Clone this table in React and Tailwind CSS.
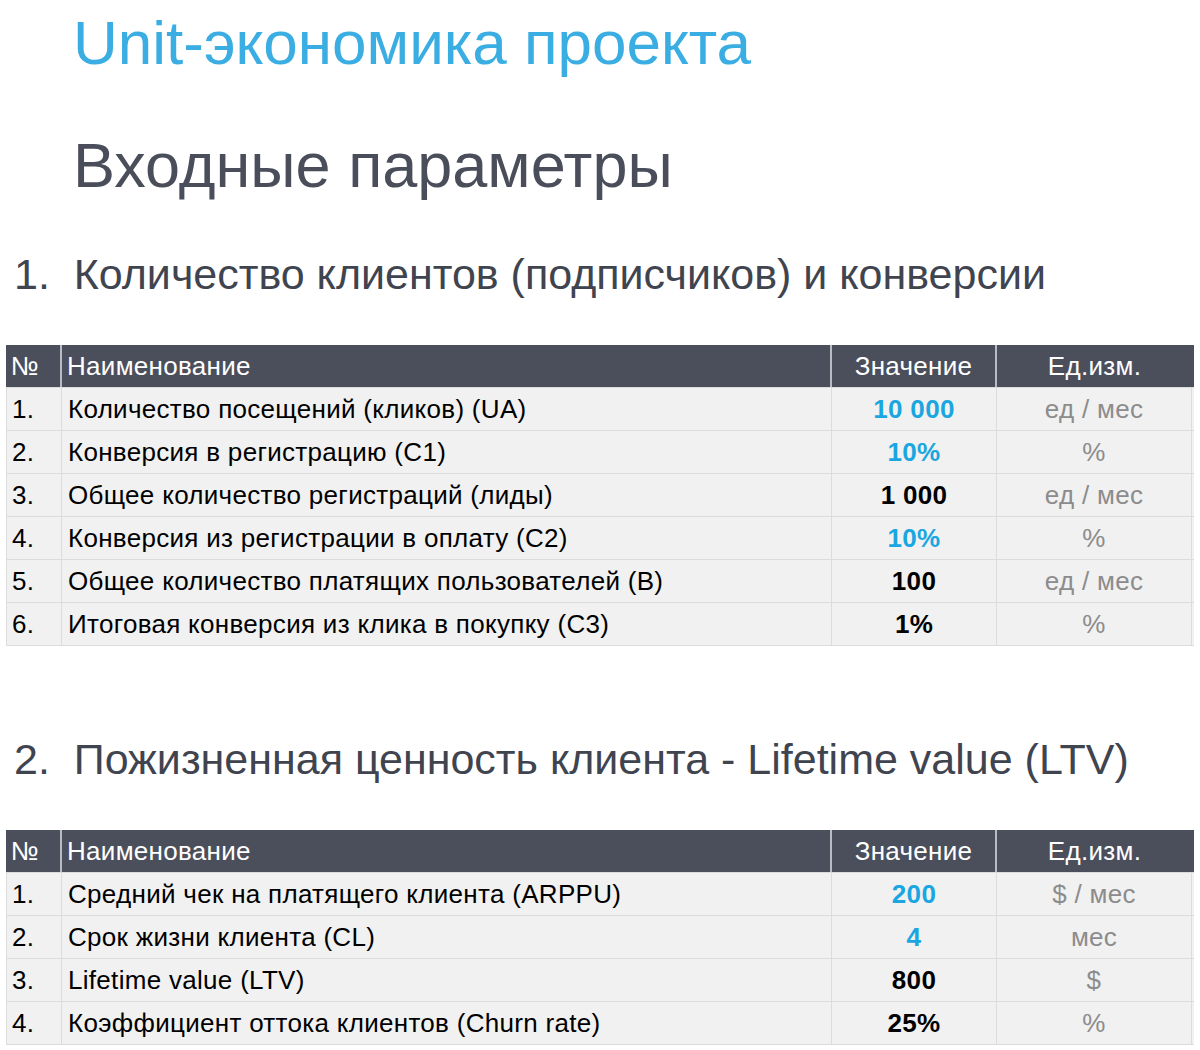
import React from "react";

const conversion = [
  { n: "1.", name: "Количество посещений (кликов) (UA)", value: "10 000", input: true, unit: "ед / мес" },
  { n: "2.", name: "Конверсия в регистрацию (C1)", value: "10%", input: true, unit: "%" },
  { n: "3.", name: "Общее количество регистраций (лиды)", value: "1 000", unit: "ед / мес" },
  { n: "4.", name: "Конверсия из регистрации в оплату (C2)", value: "10%", input: true, unit: "%" },
  { n: "5.", name: "Общее количество платящих пользователей (B)", value: "100", unit: "ед / мес" },
  { n: "6.", name: "Итоговая конверсия из клика в покупку (C3)", value: "1%", unit: "%" },
];

const ltv = [
  { n: "1.", name: "Средний чек на платящего клиента (ARPPU)", value: "200", input: true, unit: "$ / мес" },
  { n: "2.", name: "Срок жизни клиента (CL)", value: "4", input: true, unit: "мес" },
  { n: "3.", name: "Lifetime value (LTV)", value: "800", unit: "$" },
  { n: "4.", name: "Коэффициент оттока клиентов (Churn rate)", value: "25%", unit: "%" },
];

function ParamsTable({ rows }) {
  return (
    <div className="mx-[6px] border-b border-[#dcdcdc]">
      <div className="grid grid-cols-[56px_770px_165px_195px] h-[42px] bg-[#4b4f5b] text-white text-[26px] tracking-[0.3px] leading-none">
        <div className="flex items-center pl-[5px] border-r-2 border-[#b9bcc2]">№</div>
        <div className="flex items-center pl-[5px] border-r-2 border-[#b9bcc2]">Наименование</div>
        <div className="flex items-center justify-center border-r-2 border-[#b9bcc2]">Значение</div>
        <div className="flex items-center justify-center">Ед.изм.</div>
      </div>
      {rows.map((r, i) => (
        <div
          key={i}
          className="grid grid-cols-[56px_770px_165px_195px] h-[43px] bg-[#f1f1f1] border-t border-[#dcdcdc] text-[26px] tracking-[0.3px] leading-none text-black"
        >
          <div className="flex items-center pl-[5px] border-l border-r border-[#dcdcdc]">{r.n}</div>
          <div className="flex items-center pl-[6px] border-r border-[#dcdcdc]">{r.name}</div>
          <div
            className={
              "flex items-center justify-center font-bold border-r border-[#dcdcdc] " +
              (r.input ? "text-[#1aa6e0]" : "text-black")
            }
          >
            {r.value}
          </div>
          <div className="flex items-center justify-center text-[#8c8c8c] border-r border-[#dcdcdc]">{r.unit}</div>
        </div>
      ))}
    </div>
  );
}

export default function App() {
  return (
    <div className="w-[1200px] h-[1050px] bg-white overflow-hidden font-[family-name:'Liberation_Sans',Arial,sans-serif]">
      <h1 className="pl-[73px] pt-[12px] text-[62px] leading-none text-[#3aade2]">Unit-экономика проекта</h1>
      <h2 className="pl-[73px] mt-[60px] text-[63px] leading-none text-[#4a4e5a]">Входные параметры</h2>
      <h3 className="pl-[14px] mt-[56px] text-[43px] leading-none text-[#40444f]">
        1.&nbsp; Количество клиентов (подписчиков) и конверсии
      </h3>
      <div className="mt-[49px]">
        <ParamsTable rows={conversion} />
      </div>
      <h3 className="pl-[14px] mt-[92px] text-[43px] leading-none text-[#40444f]">
        2.&nbsp; Пожизненная ценность клиента - Lifetime value (LTV)
      </h3>
      <div className="mt-[49px]">
        <ParamsTable rows={ltv} />
      </div>
    </div>
  );
}
